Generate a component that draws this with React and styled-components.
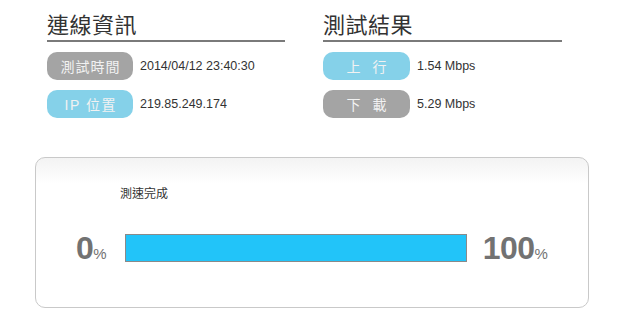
import React from "react";
import styled, { createGlobalStyle } from "styled-components";

const GlobalStyle = createGlobalStyle`
  html, body {
    margin: 0;
    padding: 0;
    background: #fff;
  }
  body {
    font-family: "Liberation Sans", "Noto Sans CJK TC", sans-serif;
    color: #333;
  }
`;

const Page = styled.div`
  width: 640px;
  height: 330px;
  padding: 12px 0 0 0;
  box-sizing: border-box;
`;

const Header = styled.div`
  display: grid;
  grid-template-columns: 238px 239px;
  column-gap: 38px;
  margin-left: 47px;
`;

const Section = styled.section`
  display: flex;
  flex-direction: column;
`;

const Title = styled.h2`
  margin: 0;
  font-size: 22px;
  line-height: 28px;
  font-weight: normal;
  color: #333;
  letter-spacing: 0.5px;
  border-bottom: 2px solid #7a7a7a;
`;

const Rows = styled.div`
  display: flex;
  flex-direction: column;
  gap: 10px;
  margin-top: 10px;
`;

const Row = styled.div`
  display: flex;
  align-items: center;
  gap: 7px;
`;

const Badge = styled.span`
  display: flex;
  align-items: center;
  justify-content: center;
  width: ${(p) => p.$width || 86}px;
  height: 28px;
  box-sizing: border-box;
  padding-left: ${(p) => p.$spacing || 1}px;
  border-radius: 10px;
  background: ${(p) => (p.$tone === "blue" ? "#85d1e9" : "#a4a4a4")};
  color: #f2f2f2;
  font-size: 14px;
  letter-spacing: ${(p) => p.$spacing || 1}px;
  white-space: pre;
`;

const Value = styled.span`
  font-size: 12.5px;
  color: #333;
`;

const Panel = styled.div`
  margin: 39px 0 0 35px;
  width: 554px;
  height: 151px;
  box-sizing: border-box;
  border: 1px solid #c9c9c9;
  border-radius: 10px;
  background: linear-gradient(#f3f3f3 0px, #fff 26px);
  padding: 26px 0 0 84px;
`;

const Status = styled.div`
  font-size: 12px;
  color: #333;
  font-family: "Noto Sans CJK TC", sans-serif;
`;

const BarRow = styled.div`
  display: flex;
  align-items: center;
  margin: 31px 0 0 -44px;
`;

const Percent = styled.span`
  font-size: 32px;
  font-weight: bold;
  color: #727272;
  line-height: 1;
  letter-spacing: -0.5px;
  small {
    font-size: 15px;
    font-weight: normal;
    letter-spacing: 0;
  }
`;

const Bar = styled.div`
  width: 342px;
  height: 28px;
  box-sizing: border-box;
  border: 1px solid #8a8a8a;
  background: #ededed;
  margin: 0 ${(p) => p.$right}px 0 ${(p) => p.$left}px;
`;

const Fill = styled.div`
  height: 100%;
  background: #22c4f9;
`;

export default function App() {
  const progress = 100;
  return (
    <Page>
      <GlobalStyle />
      <Header>
        <Section>
          <Title>連線資訊</Title>
          <Rows>
            <Row>
              <Badge $tone="gray">測試時間</Badge>
              <Value>2014/04/12 23:40:30</Value>
            </Row>
            <Row>
              <Badge $tone="blue" $spacing={1.5}>IP 位置</Badge>
              <Value>219.85.249.174</Value>
            </Row>
          </Rows>
        </Section>
        <Section>
          <Title>測試結果</Title>
          <Rows>
            <Row>
              <Badge $tone="blue" $width={87} $spacing={4}>上 行</Badge>
              <Value>1.54 Mbps</Value>
            </Row>
            <Row>
              <Badge $tone="gray" $width={87} $spacing={4}>下 載</Badge>
              <Value>5.29 Mbps</Value>
            </Row>
          </Rows>
        </Section>
      </Header>
      <Panel>
        <Status>測速完成</Status>
        <BarRow>
          <Percent>
            0<small>%</small>
          </Percent>
          <Bar $left={18} $right={16}>
            <Fill style={{ width: `${progress}%` }} />
          </Bar>
          <Percent>
            100<small>%</small>
          </Percent>
        </BarRow>
      </Panel>
    </Page>
  );
}
